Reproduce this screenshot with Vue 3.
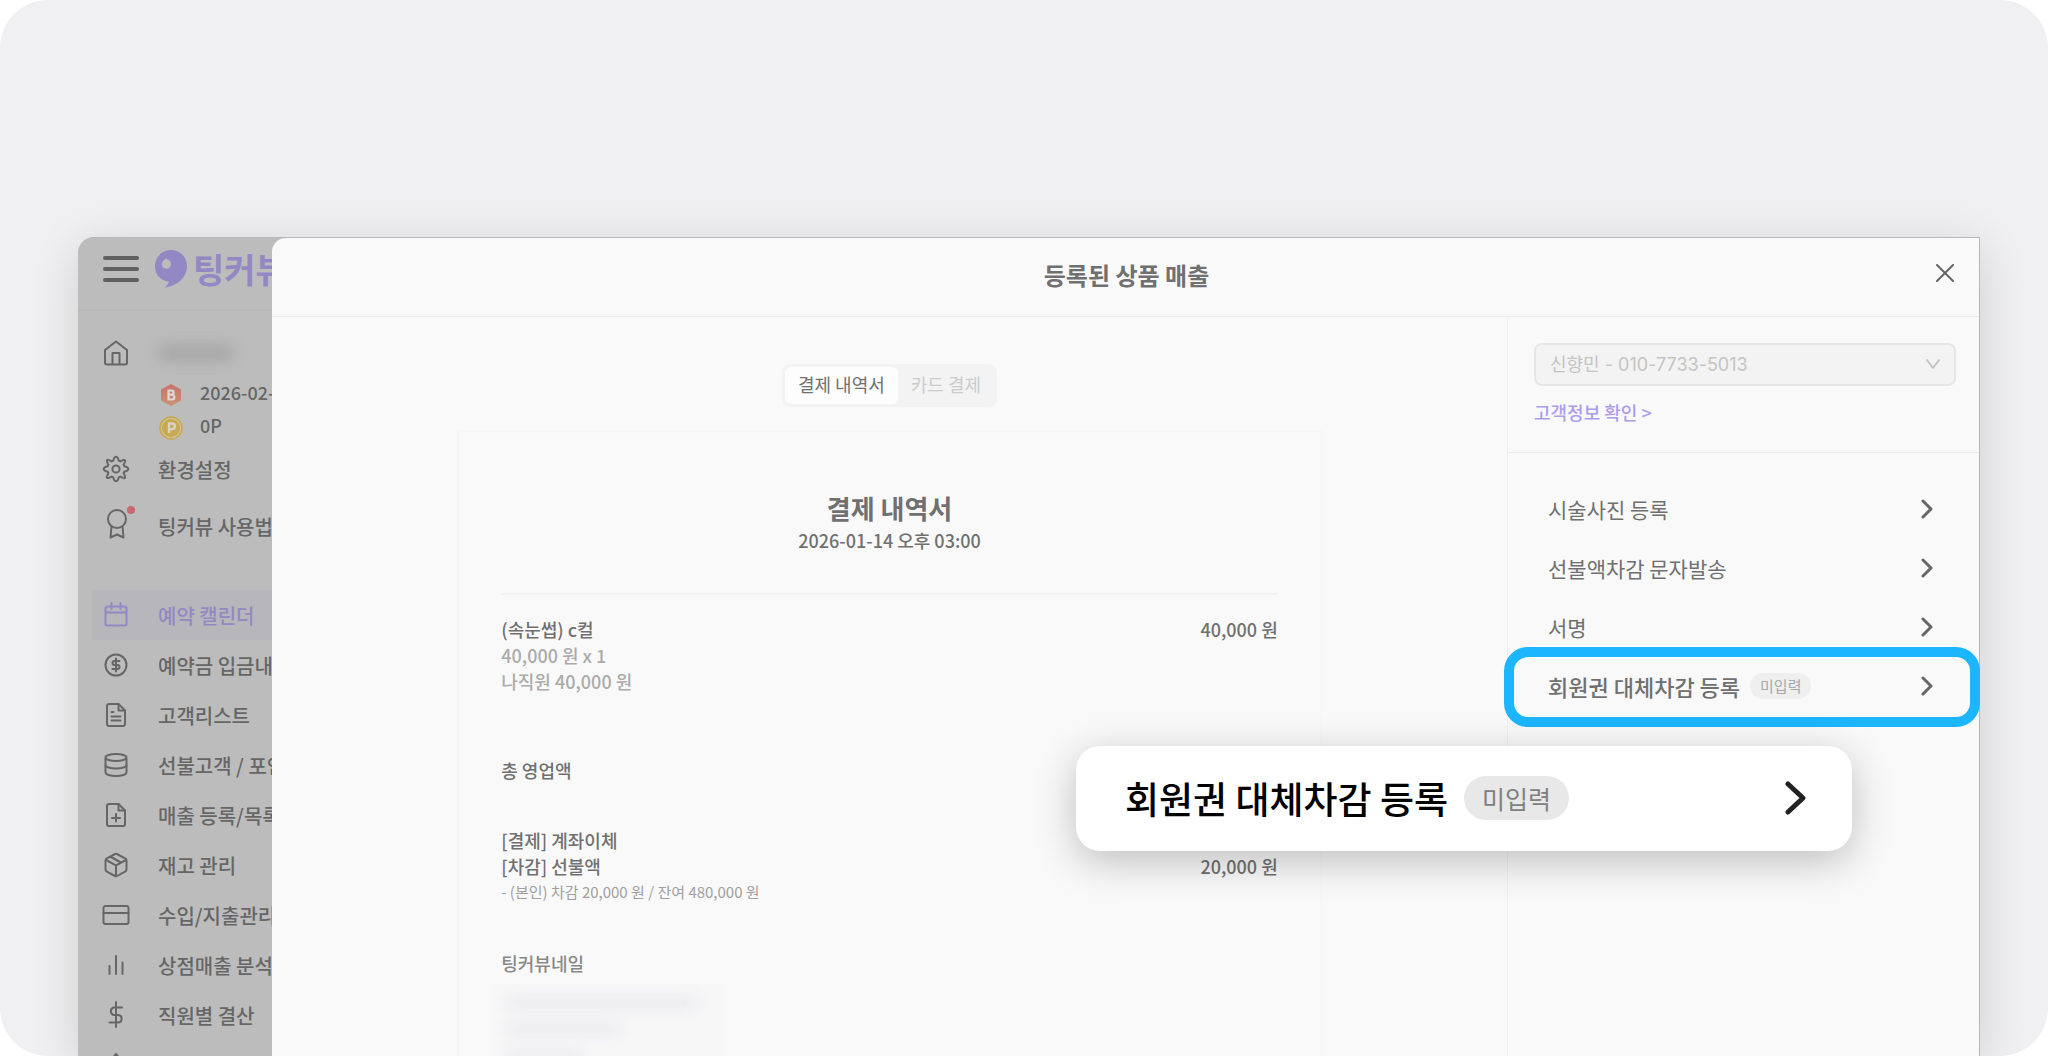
<template>
  <div class="stage">
    <div class="window">
      <aside class="sidebar">
        <header class="brand">
          <button class="menu-btn" type="button" aria-label="메뉴">
            <span></span><span></span><span></span>
          </button>
          <svg class="brand-mark" viewBox="0 0 32 38" aria-hidden="true">
            <path fill="#9388c3" fill-rule="evenodd" d="M16 0C25 0 32 7 32 16C32 27 23 36 9.500 37.500C13 35 14 33 13.500 31.500C5 30.500 0 24 0 16C0 7 7 0 16 0ZM11 8.500L9 10.200A4.600 4.600 0 1 0 14.500 10.600Z" />
          </svg>
          <span class="brand-name">팅커뷰</span>
        </header>

        <div class="account">
          <div class="nav-row shop">
            <SideIcon name="home" />
            <span class="shop-blur" aria-hidden="true"></span>
          </div>
          <div class="balance">
            <svg width="24" height="24" viewBox="0 0 24 24" aria-hidden="true">
              <path d="M12 1L22 6.500V17.500L12 23L2 17.500V6.500Z" fill="url(#badge-b)" />
              <path d="M9.500 7.500H12.500A2 2 0 0 1 12.500 11.700H9.500ZM9.500 11.700H13A2.300 2.300 0 0 1 13 16.500H9.500Z" fill="none" stroke="#dcd8d6" stroke-width="2.200" />
              <defs>
                <linearGradient id="badge-b" x1="0" y1="0" x2="0" y2="1">
                  <stop offset="0" stop-color="#c9716f" />
                  <stop offset="1" stop-color="#c9936f" />
                </linearGradient>
              </defs>
            </svg>
            <span>2026-02-28</span>
          </div>
          <div class="balance">
            <svg width="24" height="24" viewBox="0 0 24 24" aria-hidden="true">
              <circle cx="12" cy="12" r="11" fill="#cfc39a" stroke="#c9a94f" stroke-width="1.500" />
              <circle cx="12" cy="12" r="9" fill="#c9a94f" />
              <path d="M10 17V7.500H13A2.800 2.800 0 0 1 13 13.200H10" fill="none" stroke="#d8d4c8" stroke-width="2.400" />
            </svg>
            <span>0P</span>
          </div>
          <a class="nav-row" href="#"><SideIcon name="gear" />환경설정</a>
          <a class="nav-row guide" href="#">
            <SideIcon name="award" />팅커뷰 사용법
            <i class="dot"></i>
          </a>
        </div>

        <nav class="nav">
          <a
            v-for="item in menu"
            :key="item.icon"
            class="nav-row"
            :class="{ active: item.active }"
            href="#"
          >
            <SideIcon :name="item.icon" />{{ item.label }}
          </a>
        </nav>
      </aside>

      <section class="modal">
        <header class="modal-header">
          <h1>등록된 상품 매출</h1>
          <button class="close-btn" type="button" aria-label="닫기">
            <svg width="18" height="18" viewBox="0 0 18 18"><path d="M1 1L17 17M17 1L1 17" /></svg>
          </button>
        </header>

        <div class="modal-body">
          <main class="content">
            <div class="tabs">
              <button
                v-for="tab in tabs"
                :key="tab"
                type="button"
                class="tab"
                :class="{ active: tab === currentTab }"
                @click="currentTab = tab"
              >
                {{ tab }}
              </button>
            </div>

            <article class="receipt">
              <h2>결제 내역서</h2>
              <p class="date">2026-01-14 오후 03:00</p>
              <div class="lines">
                <div class="line"><span>(속눈썹) c컬</span><span>40,000 원</span></div>
                <div class="line muted">40,000 원 x 1</div>
                <div class="line muted">나직원 40,000 원</div>
              </div>
              <div class="total line"><span>총 영업액</span></div>
              <div class="line">[결제] 계좌이체</div>
              <div class="line"><span>[차감] 선불액</span><span>20,000 원</span></div>
              <div class="line note">- (본인) 차감 20,000 원 / 잔여 480,000 원</div>
              <div class="shop-name line">팅커뷰네일</div>
              <div class="address-blur" aria-hidden="true"><i></i><i></i><i></i></div>
            </article>
          </main>

          <aside class="panel">
            <div class="customer">
              <div class="select-wrap">
                <select aria-label="고객" disabled>
                  <option>신향민 - 010-7733-5013</option>
                </select>
                <svg width="14" height="10" viewBox="0 0 14 10"><path d="M1 1L7 9L13 1" /></svg>
              </div>
              <a class="customer-link" href="#">고객정보 확인 &gt;</a>
            </div>

            <ul class="actions">
              <li v-for="action in actions" :key="action.label">
                <button type="button" class="action" :class="{ focus: action.badge }">
                  <span>{{ action.label }}</span>
                  <span v-if="action.badge" class="badge">{{ action.badge }}</span>
                  <svg class="chevron" width="12" height="20" viewBox="0 0 12 20"><path d="M2 2L10 10L2 18" /></svg>
                </button>
              </li>
            </ul>

            <button type="button" class="callout">
              <span>회원권 대체차감 등록</span>
              <span class="badge">미입력</span>
              <svg class="chevron" width="22" height="34" viewBox="0 0 22 34"><path d="M3 3L18 17L3 31" /></svg>
            </button>
          </aside>
        </div>
      </section>
    </div>
  </div>
</template>

<script setup>
import { h, ref } from 'vue'

const icons = {
  home: ['M1 9L12 0.500L23 9V21.500A2 2 0 0 1 21 23.500H3A2 2 0 0 1 1 21.500Z', 'M8.500 23V12H15.500V23'],
  gear: [
    'M12 8.400A3.600 3.600 0 1 1 12 15.600A3.600 3.600 0 1 1 12 8.400Z',
    'M10 1.300Q12 -1.900 14 1.300L14.700 3.700L16.400 4.400L18.900 3.100Q22 2.300 20.900 5.100L19.600 7.600L20.300 9.300L22.700 10Q25.900 12 22.700 14L20.300 14.700L19.600 16.400L20.900 18.900Q21.700 22 18.900 20.900L16.400 19.600L14.700 20.300L14 22.700Q12 25.900 10 22.700L9.300 20.300L7.600 19.600L5.100 20.900Q2 21.700 3.100 18.900L4.400 16.400L3.700 14.700L1.300 14Q-1.900 12 1.300 10L3.700 9.300L4.400 7.600L3.100 5.100Q2.300 2 5.100 3.100L7.600 4.400L9.300 3.700Z'
  ],
  award: ['M13 -4A9 9 0 1 1 13 14A9 9 0 1 1 13 -4Z', 'M7.500 12.500L6.500 23.500L13 20.500L19.500 23.500L18.500 12.500'],
  calendar: ['M3.500 3.500H20.500A2 2 0 0 1 22.500 5.500V20.500A2 2 0 0 1 20.500 22.500H3.500A2 2 0 0 1 1.500 20.500V5.500A2 2 0 0 1 3.500 3.500ZM1.500 9.500H22.500', 'M7.500 0V6M16.500 0V6'],
  deposit: ['M12 1.500A10.500 10.500 0 1 1 12 22.500A10.500 10.500 0 1 1 12 1.500Z', 'M12 5.500V18.500M15.500 8H10.500A2 2 0 0 0 10.500 12H13.500A2 2 0 0 1 13.500 16H8.500'],
  file: ['M14.500 1H5A2 2 0 0 0 3 3V21A2 2 0 0 0 5 23H19A2 2 0 0 0 21 21V7.500Z', 'M14.500 1V7.500H21M7.500 9H9.500M7.500 13.500H16.500M7.500 17.500H16.500'],
  database: ['M1.500 4.500A10.500 3.500 0 0 0 22.500 4.500A10.500 3.500 0 0 0 1.500 4.500V19.500A10.500 3.500 0 0 0 22.500 19.500V4.500', 'M1.500 12A10.500 3.500 0 0 0 22.500 12'],
  filePlus: ['M14.500 1H5A2 2 0 0 0 3 3V21A2 2 0 0 0 5 23H19A2 2 0 0 0 21 21V7.500Z', 'M14.500 1V7.500H21M12 11V18.500M8 15H16'],
  box: ['M11 1L2.500 5.700A2 2 0 0 0 1.500 7.500V16.500A2 2 0 0 0 2.500 18.300L11 23A2 2 0 0 0 13 23L21.500 18.300A2 2 0 0 0 22.500 16.500V7.500A2 2 0 0 0 21.500 5.700L13 1A2 2 0 0 0 11 1Z', 'M2 7L12 12.300L22 7M12 12.300V23M7 4L17 9.500'],
  card: ['M1.500 3H22.500A2 2 0 0 1 24.500 5V19A2 2 0 0 1 22.500 21H1.500A2 2 0 0 1 -0.500 19V5A2 2 0 0 1 1.500 3Z', 'M-0.500 10H24.500'],
  chart: ['M5.500 21V13M12 21V3M18.500 21V9.500'],
  dollar: ['M12 -1V24', 'M18 4.500H9.500A4 4 0 0 0 9.500 12H14.500A3.800 3.800 0 0 1 14.500 19.500H5.500'],
  tag: ['M3 12L12 1L21 12V22H3Z']
}

const SideIcon = (props) =>
  h(
    'svg',
    {
      width: 26,
      height: 26,
      viewBox: '-1 -1 26 26',
      fill: 'none',
      stroke: 'currentColor',
      'stroke-width': 2,
      'stroke-linecap': 'round',
      'stroke-linejoin': 'round',
      overflow: 'visible',
      'aria-hidden': 'true'
    },
    icons[props.name].map((d) => h('path', { d }))
  )
SideIcon.props = ['name']

const menu = [
  { icon: 'calendar', label: '예약 캘린더', active: true },
  { icon: 'deposit', label: '예약금 입금내역' },
  { icon: 'file', label: '고객리스트' },
  { icon: 'database', label: '선불고객 / 포인트' },
  { icon: 'filePlus', label: '매출 등록/목록' },
  { icon: 'box', label: '재고 관리' },
  { icon: 'card', label: '수입/지출관리' },
  { icon: 'chart', label: '상점매출 분석' },
  { icon: 'dollar', label: '직원별 결산' },
  { icon: 'tag', label: '' }
]

const tabs = ['결제 내역서', '카드 결제']
const currentTab = ref(tabs[0])

const actions = [
  { label: '시술사진 등록' },
  { label: '선불액차감 문자발송' },
  { label: '서명' },
  { label: '회원권 대체차감 등록', badge: '미입력' }
]
</script>

<style>
body {
  margin: 0;
  background: #fff;
}
</style>

<style scoped>
* {
  box-sizing: border-box;
}

.stage {
  height: 100vh;
  padding: 237px 68px 0 78px;
  overflow: hidden;
  background: #f0f0f2;
  border-radius: 48px;
  font-family: "Noto Sans CJK KR", "Noto Sans", sans-serif;
  font-size: 18px;
  font-weight: 500;
  color: #707070;
}

button {
  font: inherit;
  color: inherit;
  border: none;
  background: none;
  padding: 0;
  cursor: pointer;
}

a {
  color: inherit;
  text-decoration: none;
}

h1,
h2,
p,
ul {
  margin: 0;
  padding: 0;
}

.window {
  display: flex;
  height: 100%;
  background: #bcbcbc;
  border: 1px solid #b8b8bc;
  border-bottom: none;
  border-left: none;
  border-radius: 16px 0 0 0;
  box-shadow: 0 10px 48px rgba(0, 0, 0, 0.14);
}

/* sidebar */
.sidebar {
  width: 194px;
  flex: none;
  overflow: hidden;
  white-space: nowrap;
  color: #666;
  font-size: 20px;
}

.brand {
  display: flex;
  align-items: center;
  height: 73px;
  padding: 0 0 10px 25px;
  border-bottom: 2px solid #b8b8b8;
}

.menu-btn {
  display: flex;
  flex-direction: column;
  gap: 7px;
  width: 36px;
  flex: none;
}

.menu-btn span {
  height: 4px;
  border-radius: 2px;
  background: #606060;
}

.brand-mark {
  width: 32px;
  height: 38px;
  flex: none;
  margin-left: 16px;
}

.brand-name {
  margin-left: 6px;
  font-size: 34px;
  line-height: 40px;
  font-weight: 700;
  color: #9388c3;
}

.nav-row {
  display: flex;
  align-items: center;
  height: 50px;
  padding-left: 11px;
  margin-left: 14px;
  gap: 29px;
}

.nav-row svg {
  flex: none;
}

.account {
  padding-top: 17px;
  height: 279px;
}

.shop-blur {
  width: 76px;
  height: 18px;
  border-radius: 6px;
  background: #a8a8a8;
  filter: blur(7px);
}

.balance {
  display: flex;
  align-items: center;
  gap: 17px;
  height: 33px;
  padding-left: 81px;
  font-size: 18px;
}

.balance svg {
  flex: none;
}

.balance span {
  padding-bottom: 6px;
}

.guide {
  position: relative;
  margin-top: 7px;
}

.dot {
  position: absolute;
  left: 35px;
  top: 5px;
  width: 8px;
  height: 8px;
  border-radius: 50%;
  background: #c9686f;
}

.active.nav-row {
  color: #9388c3;
  background: #b7b6bb;
}

/* modal */
.modal {
  display: flex;
  flex-direction: column;
  flex: 1;
  min-width: 0;
  background: #f9f9f9;
  border-radius: 14px 0 0 0;
}

.modal-header {
  position: relative;
  display: flex;
  align-items: center;
  justify-content: center;
  height: 79px;
  flex: none;
  padding: 0 0 4px 2px;
  border-bottom: 1px solid #ebebeb;
}

.modal-header h1 {
  font-size: 24px;
  line-height: 36px;
  font-weight: 700;
}

.close-btn {
  position: absolute;
  right: 24px;
  top: 25px;
  width: 20px;
  height: 20px;
  display: grid;
  place-items: center;
}

.close-btn svg,
.select-wrap svg,
.chevron {
  fill: none;
  stroke: #666;
  stroke-width: 2;
  stroke-linecap: round;
  stroke-linejoin: round;
}

.modal-body {
  display: flex;
  flex: 1;
  min-height: 0;
}

.content {
  flex: 1;
  min-width: 0;
  overflow: hidden;
  display: flex;
  flex-direction: column;
  align-items: center;
  padding-top: 47px;
}

.tabs {
  display: flex;
  flex: none;
  height: 43px;
  padding: 3px;
  margin-bottom: 23px;
  border-radius: 8px;
  background: #f3f3f3;
}

.tab {
  padding: 0 13px 2px;
  font-weight: 400;
  line-height: 35px;
  border-radius: 6px;
  color: #ccc;
}

.tab.active {
  background: #fdfdfd;
  color: #707070;
}

.receipt {
  width: 70%;
  flex: none;
  padding: 58px 42px 0;
  border: 2px solid #f6f6f6;
}

.receipt h2 {
  font-size: 26px;
  line-height: 36px;
  font-weight: 700;
  text-align: center;
}

.date {
  line-height: 28px;
  text-align: center;
}

.lines {
  margin-top: 39px;
  padding-top: 21px;
  height: 164px;
  border-top: 2px solid #f2f2f2;
}

.line {
  display: flex;
  justify-content: space-between;
  line-height: 26px;
}

.muted {
  color: #ababab;
}

.total {
  margin-bottom: 44px;
}

.note {
  font-size: 15px;
  font-weight: 400;
  color: #a0a0a0;
}

.shop-name {
  margin-top: 45px;
  color: #888;
}

.address-blur {
  display: flex;
  flex-direction: column;
  gap: 12px;
  width: 232px;
  margin: 8px 0 0 -8px;
  padding: 12px 28px 12px 14px;
  background: #f7f7f8;
}

.address-blur i {
  height: 14px;
  background: #ededf0;
  filter: blur(6px);
}

.address-blur i:nth-child(2) {
  width: 60%;
}

.address-blur i:nth-child(3) {
  width: 40%;
}

/* right panel */
.panel {
  position: relative;
  width: 472px;
  flex: none;
  border-left: 1px solid #efefef;
}

.customer {
  height: 136px;
  padding: 26px 23px 0 26px;
  border-bottom: 1px solid #ebebeb;
}

.select-wrap {
  position: relative;
  height: 43px;
  margin-bottom: 12px;
}

.select-wrap select {
  width: 100%;
  height: 100%;
  padding: 0 40px 0 14px;
  border: 2px solid #e6e6e6;
  border-radius: 8px;
  background: #f3f3f3;
  color: #c4c4c4;
  font-family: Inter, "Noto Sans CJK KR", sans-serif;
  font-size: 18px;
  font-weight: 400;
  opacity: 1;
  appearance: none;
}

.select-wrap svg {
  position: absolute;
  right: 16px;
  top: 16px;
  stroke: #c4c4c4;
}

.customer-link {
  display: block;
  line-height: 28px;
  color: #ab9deb;
}

.actions {
  list-style: none;
  padding-top: 26px;
}

.action {
  display: flex;
  align-items: center;
  position: relative;
  width: 100%;
  height: 59px;
  padding: 0 46px 0 40px;
  font-size: 21px;
  font-weight: 400;
}

.chevron {
  margin-left: auto;
  stroke-width: 3;
}

.action.focus {
  font-size: 22px;
  font-weight: 500;
}

/* highlight ring around the action */
.action.focus::after {
  content: "";
  position: absolute;
  inset: -9px -1px -12px -4px;
  border: 10px solid #1cb5ff;
  border-radius: 24px;
}

.badge {
  margin-left: 10px;
  padding: 0 10px;
  border-radius: 13px;
  background: #efefef;
  color: #a8a8a8;
  font-size: 15px;
  line-height: 26px;
  font-weight: 400;
}

.callout {
  position: absolute;
  right: 127px;
  top: 429px;
  display: flex;
  align-items: center;
  width: 776px;
  height: 105px;
  padding: 0 45px 2px 49px;
  border-radius: 24px;
  background: #fff;
  box-shadow: 0 10px 40px rgba(0, 0, 0, 0.24);
  color: #000;
  font-size: 37px;
}

.callout .badge {
  margin-left: 16px;
  padding: 0 18px;
  border-radius: 22px;
  background: #e8e8e8;
  color: #808080;
  font-size: 25px;
  line-height: 44px;
}

.callout .chevron {
  stroke: #222;
  stroke-width: 5;
}
</style>
